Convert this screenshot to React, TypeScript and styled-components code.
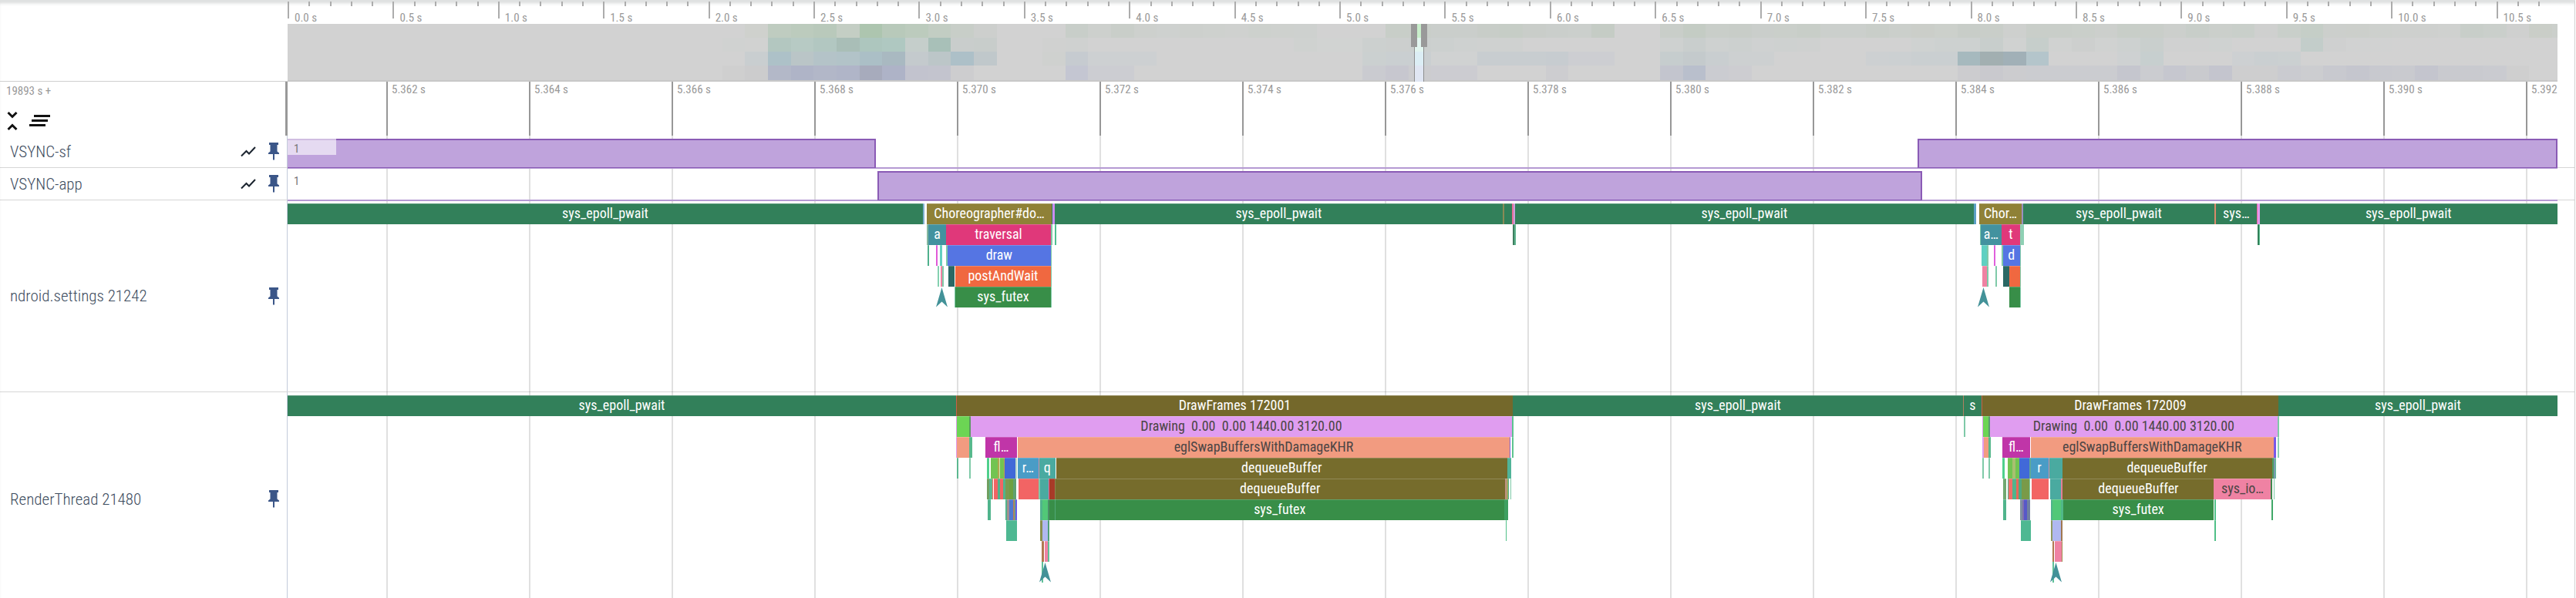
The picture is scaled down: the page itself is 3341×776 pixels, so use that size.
import React from "react";
import styled, { createGlobalStyle } from "styled-components";

const GlobalStyle = createGlobalStyle`
  * { box-sizing: border-box; }
  body {
    margin: 0;
    background: #fff;
    font-family: "Roboto Condensed", Roboto, sans-serif;
  }
`;

/* Length of the visible window, in timeline units. */
const SPAN = 2944;
const pct = (units: number) => `${(units / SPAN) * 100}%`;

type SliceData = [start: number, end: number, color: string, label?: string];

const GREEN = "#32805a";
const CHOREO = "#8f8137";
const FRAME = "#74682b";
const DEQUEUE = "#766c2c";
const DRAWING = "#e09df0";
const SALMON = "#f29b80";
const FUTEX = "#388e48";
const TEAL = "#43929f";
const QUEUE = "#4aaaa0";
const MINT = "#50b48c";
const PALE = "#7fcaa8";
const RED = "#f26464";
const LIME = "#72c452";
const SPRING = "#52c878";
const PERI = "#b0b8f0";
const PINK = "#ef82a3";
const MARK = "arrow";
const STEM = "stem";
const DARK_TEXT = [DRAWING, SALMON, PINK];

const settingsLanes: SliceData[][] = [
  [
    [0, 824, GREEN, "sys_epoll_pwait"],
    [824, 826, "#7fb0cf"],
    [829, 991, CHOREO, "Choreographer#do…"],
    [991, 992, GREEN],
    [992, 995, "#cc8cf0"],
    [995, 1576, GREEN, "sys_epoll_pwait"],
    [1576, 1578, "#8a8a55"],
    [1578, 1588, GREEN],
    [1588, 1590, "#e8709a"],
    [1590, 1592, "#c9a0dc"],
    [1592, 2187, GREEN, "sys_epoll_pwait"],
    [2187, 2190, "#5b9fc4"],
    [2194, 2249, CHOREO, "Chor…"],
    [2249, 2251, "#9c90c0"],
    [2251, 2499, GREEN, "sys_epoll_pwait"],
    [2499, 2501, "#d98a6a"],
    [2501, 2554, GREEN, "sys…"],
    [2554, 2555, "#f06aa0"],
    [2555, 2558, "#e39af0"],
    [2558, 2944, GREEN, "sys_epoll_pwait"],
  ],
  [
    [829, 831, "#85b8a0"],
    [831, 854, TEAL, "a"],
    [854, 990, "#e0387a", "traversal"],
    [990, 992, PALE],
    [995, 997, "#4fbf90"],
    [1589, 1591, "#3f7f60"],
    [1591, 1593, "#5cb28c"],
    [2195, 2196, PALE],
    [2196, 2223, TEAL, "a…"],
    [2223, 2247, "#e0387a", "t"],
    [2247, 2252, "#8fd0b4"],
    [2555, 2557, GREEN],
    [2557, 2558, "#5cc090"],
  ],
  [
    [830, 832, "#4fb08c"],
    [841, 843, "#e05ad8"],
    [846, 849, "#62d0c0"],
    [854, 856, PALE],
    [856, 990, "#5575e3", "draw"],
    [990, 991, PALE],
    [2197, 2204, "#5fd0c2"],
    [2204, 2206, PALE],
    [2213, 2215, "#e060dc"],
    [2223, 2225, PALE],
    [2225, 2247, "#5575e3", "d"],
    [2247, 2248, PALE],
  ],
  [
    [843, 845, "#85d0b0"],
    [847, 849, PINK],
    [849, 851, PALE],
    [857, 865, "#2a6864"],
    [866, 990, "#f06840", "postAndWait"],
    [990, 991, PALE],
    [2198, 2204, PINK],
    [2204, 2206, PALE],
    [2215, 2217, PALE],
    [2225, 2233, "#2a6864"],
    [2233, 2247, "#f06840"],
    [2247, 2248, PALE],
  ],
  [
    [841, 856, MARK],
    [865, 866, PALE],
    [866, 990, FUTEX, "sys_futex"],
    [990, 991, PALE],
    [2192, 2207, MARK],
    [2233, 2247, FUTEX],
    [2247, 2248, PALE],
  ],
];

const renderLanes: SliceData[][] = [
  [
    [0, 867, GREEN, "sys_epoll_pwait"],
    [867, 868, "#c8604a"],
    [868, 1589, FRAME, "DrawFrames 172001"],
    [1589, 2173, GREEN, "sys_epoll_pwait"],
    [2173, 2174, "#b08060"],
    [2174, 2197, GREEN, "s"],
    [2197, 2198, "#c8604a"],
    [2198, 2582, FRAME, "DrawFrames 172009"],
    [2582, 2944, GREEN, "sys_epoll_pwait"],
  ],
  [
    [867, 868, DRAWING],
    [868, 884, "#6cd554"],
    [884, 886, "#5a9a60"],
    [886, 1588, DRAWING, "Drawing  0.00  0.00 1440.00 3120.00"],
    [1588, 1590, "#5cc490"],
    [2174, 2176, PALE],
    [2198, 2199, DRAWING],
    [2199, 2206, "#6cd554"],
    [2206, 2208, "#5a9a70"],
    [2208, 2581, DRAWING, "Drawing  0.00  0.00 1440.00 3120.00"],
    [2581, 2583, PALE],
  ],
  [
    [867, 868, DRAWING],
    [868, 884, SALMON],
    [884, 888, "#57b88c"],
    [905, 946, "#c035a8", "fl…"],
    [947, 1585, SALMON, "eglSwapBuffersWithDamageKHR"],
    [1585, 1586, "#7a68e0"],
    [1588, 1590, "#5cc490"],
    [2198, 2200, DRAWING],
    [2200, 2206, SALMON],
    [2206, 2209, "#57b88c"],
    [2224, 2260, "#c035a8", "fl…"],
    [2261, 2576, SALMON, "eglSwapBuffersWithDamageKHR"],
    [2576, 2579, "#7858e8"],
    [2581, 2583, "#8fd0b4"],
  ],
  [
    [868, 870, "#5cb890"],
    [884, 886, PALE],
    [907, 910, "#4fd08c"],
    [912, 921, LIME],
    [921, 923, "#b0a850"],
    [923, 924, "#d0e8b0"],
    [924, 929, LIME],
    [929, 930, "#c0a050"],
    [930, 944, "#4169d8"],
    [944, 946, "#b8d8c8"],
    [947, 974, "#4a9cc6", "r…"],
    [974, 975, "#d090a8"],
    [975, 996, QUEUE, "q"],
    [997, 1582, DEQUEUE, "dequeueBuffer"],
    [1582, 1587, "#50b498"],
    [2198, 2200, PALE],
    [2206, 2208, PALE],
    [2224, 2227, "#4fd08c"],
    [2231, 2237, LIME],
    [2237, 2241, "#a8c070"],
    [2241, 2246, LIME],
    [2246, 2259, "#4169d8"],
    [2259, 2261, "#60a898"],
    [2261, 2284, "#4a9cc6", "r"],
    [2284, 2285, "#d090a8"],
    [2285, 2302, QUEUE],
    [2302, 2574, DEQUEUE, "dequeueBuffer"],
    [2574, 2576, "#4f9a60"],
    [2576, 2579, "#7898b0"],
    [2579, 2580, "#60c098"],
  ],
  [
    [907, 910, "#70a060"],
    [910, 914, "#5cb890"],
    [914, 915, "#f07868"],
    [916, 921, RED],
    [921, 924, MINT],
    [924, 928, RED],
    [928, 931, MINT],
    [931, 936, "#7a9a50"],
    [936, 941, "#6fa040"],
    [941, 945, "#60a070"],
    [948, 974, RED],
    [974, 976, "#80c8a8"],
    [976, 987, QUEUE],
    [987, 988, "#f060a0"],
    [988, 995, "#a83a28"],
    [995, 996, "#8c8450"],
    [996, 1579, DEQUEUE, "dequeueBuffer"],
    [1579, 1581, "#c09080"],
    [1581, 1583, "#a0a860"],
    [1583, 1584, MINT],
    [1586, 1587, PALE],
    [2225, 2229, "#70a870"],
    [2231, 2232, MINT],
    [2232, 2237, "#f07068"],
    [2237, 2242, MINT],
    [2242, 2245, "#e86858"],
    [2245, 2249, "#50a880"],
    [2249, 2259, "#7a9a48"],
    [2259, 2260, PALE],
    [2262, 2284, RED],
    [2286, 2301, QUEUE],
    [2301, 2303, "#e08098"],
    [2303, 2499, DEQUEUE, "dequeueBuffer"],
    [2499, 2573, PINK, "sys_io…"],
    [2573, 2575, "#408850"],
    [2577, 2578, PALE],
  ],
  [
    [908, 912, MINT],
    [931, 933, MINT],
    [933, 936, "#a09090"],
    [936, 941, "#5078d0"],
    [941, 943, "#b08060"],
    [943, 944, MINT],
    [944, 946, "#6858e8"],
    [976, 979, MINT],
    [979, 986, SPRING],
    [986, 988, "#4a9068"],
    [988, 995, FUTEX],
    [995, 996, "#50a878"],
    [996, 1578, FUTEX, "sys_futex"],
    [1578, 1583, "#3f9f60"],
    [2225, 2229, MINT],
    [2247, 2250, "#8090a0"],
    [2250, 2252, "#8070b0"],
    [2252, 2256, "#5858c8"],
    [2256, 2260, "#7080a0"],
    [2287, 2289, MINT],
    [2289, 2300, SPRING],
    [2300, 2303, "#50b888"],
    [2303, 2498, FUTEX, "sys_futex"],
    [2499, 2501, "#50c088"],
    [2573, 2575, "#40a868"],
  ],
  [
    [932, 946, "#4eb892"],
    [976, 979, "#8a9050"],
    [979, 986, PERI],
    [986, 988, "#50a078"],
    [1580, 1581, "#50c088"],
    [2248, 2261, "#4eb892"],
    [2287, 2289, "#8f9a60"],
    [2289, 2300, PERI],
    [2300, 2302, "#a07850"],
    [2499, 2501, "#50c088"],
  ],
  [
    [978, 981, "#b07850"],
    [982, 986, PINK],
    [986, 988, "#60c098"],
    [2289, 2291, "#b07850"],
    [2292, 2301, PINK],
    [2301, 2302, "#a09050"],
  ],
  [
    [975, 990, STEM],
    [2286, 2301, STEM],
  ],
];

/* Load per CPU group: one row each, [first column, colours...] runs. */
const heat: [number, string[]][][] = [
  [
    [20, ["#cfd1cd", "#bfccc0", "#bccbbd", "#b9c9bb", "#c4cec4", "#adc5af", "#b8c9ba", "#bccbbd", "#c2cdc3", "#c8cec8", "#cdcfcd"]],
    [34, ["#c8cec9", "#cdd0cd", "#c9cec9", "#cdd0cd", "#ced1cf", "#cdd0cd", "#ced1ce", "#cfd1cf", "#cdd1cd", "#ced1ce", "#ced1cf"]],
    [48, ["#c8cec8", "#c9cec9", "#cacecb", "#cacecb", "#c8cdc8", "#c6cdc6", "#c9cdc9", "#cacecb", "#cbcfcc", "#c5ccc5"]],
    [60, ["#c9cec9", "#c4ccc4", "#c9cec9", "#c8cdc8", "#cacecb", "#cacfca", "#c8cec8", "#cbcfcc", "#cbcfcc", "#c9cec9", "#cbcfcb", "#cbcec9", "#ccd0cb"]],
    [73, ["#c8cdc8", "#c9cec9", "#ced0ce", "#c9cec9", "#c9cec9", "#cacfca", "#cccfcc", "#c8cec8", "#c9cec9", "#cccfcc", "#c8cec9", "#cbcfcb", "#c9cfca"]],
    [86, ["#cfd0cf", "#c9cfca", "#c5cec7", "#cccfcc", "#cccfcb", "#cdd0cd", "#ced0ce", "#ced0ce", "#cfd1cf", "#c8cec9", "#cacfcb", "#cfd0cf", "#cacec8", "#cbcfcb"]],
  ],
  [
    [19, ["#d0d2d1", "#d1d2d1", "#b3c7c0", "#b7cac4", "#b2c7c1", "#a9beb7", "#adc6be", "#afc8c1", "#c5cecb", "#a8c0b8", "#c9cdcc", "#c8cdcb"]],
    [33, ["#d0d1d0", "#cfd1d0"]],
    [44, ["#cfd2d0", "#d1d3d2", "#d1d3d2", "#ccd0cf", "#cccfce", "#cbcfce", "#ccd0cf", "#ced1d0", "#cfd1d0", "#cfd1d0"]],
    [60, ["#ced1d0", "#c9cecd", "#ced1d0", "#ccd0cf", "#cfd1d1", "#ced1d0", "#cfd1d0"]],
    [71, ["#cfd2d1", "#cdd1d0", "#cdd1d0", "#c8cecc", "#d0d2d1", "#c6cecb", "#d0d2d1", "#cdcfce", "#d0d2d1", "#cdd1d0", "#c9cfcd", "#d0d1d1", "#d0d1d1", "#cfd2d1"]],
    [88, ["#c3cdca", "#cfd0d0", "#d1d2d2", "#d1d2d2"]],
  ],
  [
    [20, ["#c9ced0", "#adc1c8", "#bac5c7", "#b4c3c8", "#b2c3c8", "#abbfc6", "#a9b9c1", "#c4cacd", "#bcc6c8", "#adc0c8", "#c0c8cb"]],
    [33, ["#cfd1cf", "#c6cbd0", "#cdd0d2", "#cdd0d2", "#cdd0d2"]],
    [47, ["#cbd0d0", "#cacfd1", "#cacfd1", "#d0d2d2", "#d0d2d2", "#c8cdd0", "#c8cdd0", "#c8cdd0", "#c7ccd0", "#cdced2", "#cdced2"]],
    [60, ["#c6cdce", "#c4cacc", "#c9ced0", "#cdd0d1", "#cdd0d1"]],
    [69, ["#cdd0d2", "#ccd0d2", "#cacfd1", "#cacfd1", "#a6b9be", "#a2afb1", "#a1b0b7", "#b4c5cb"]],
    [80, ["#ced1d2", "#c7cfcf"]],
    [85, ["#cdd0d2", "#cacfd1", "#cbd0d1"]],
  ],
  [
    [19, ["#cfcfcf", "#cccccd", "#b3b8c8", "#afb4c7", "#b2b7c8", "#b0b5c8", "#a7abbc", "#aeb3c7", "#c2c3ce", "#c3c4ce", "#cdcdcf"]],
    [34, ["#c4c6d2", "#cccdd2", "#cccdd2"]],
    [47, ["#cacbd0", "#c7c7cf", "#cccccf", "#ccccd1", "#ccccd1"]],
    [55, ["#cdcdd0"]],
    [60, ["#c3c5ce", "#b9bfcc", "#cbccd1", "#cdcdd1"]],
    [73, ["#cccccf", "#c9c9ce", "#cccccf", "#cbccd0", "#cbccd0", "#cbccd0", "#cbccd0", "#c5c6ce", "#cbccd0", "#c6c7cf", "#c9cace", "#c4c5ce", "#cececf", "#cececf", "#cacbd0", "#cccdd0", "#c8c9cf", "#c5c6ce", "#c8c9cf", "#c9cacf", "#c4c5ce", "#c9cacf", "#c9cacf", "#cacbd0", "#cfcfcf"]],
  ],
];

const heatRow = (runs: [number, string[]][]) => {
  const cells: string[] = Array(100).fill("#d2d2d2");
  runs.forEach(([first, colors]) => colors.forEach((c, i) => (cells[first + i] = c)));
  return cells;
};

const Viewer = styled.main`
  height: 100vh;
  overflow: hidden;
  position: relative;
  border-top: 2px solid #dfe1e1;
  margin-right: 1px;
  border-right: 1px solid #d4d4d4;
  box-shadow: inset 0 4px 4px -2px #d8dada;
`;

const Columns = styled.div`
  display: grid;
  grid-template-columns: 373px minmax(0, 1fr) 22px;
`;

const Overview = styled(Columns)`
  height: 104px;
`;

const OverviewSide = styled.div`
  border-bottom: 1px solid #cfcfcf;
`;

const OverviewMain = styled.div`
  display: flex;
  flex-direction: column;
`;

const TopAxis = styled.div`
  display: flex;
  height: 29px;
  overflow: hidden;
`;

const TopTick = styled.div<{ $major: boolean }>`
  flex: none;
  height: ${(p) => (p.$major ? 22 : 6)}px;
  border-left: 2px solid #acacac;
  white-space: nowrap;
`;

const AxisText = styled.span`
  display: block;
  font-size: 15px;
  line-height: 16px;
  color: #999;
`;

const TopText = styled(AxisText)`
  padding: 13px 0 0 7px;
`;

const MiniMap = styled.div`
  position: relative;
  flex: 1;
  display: grid;
  grid-template-columns: repeat(99, minmax(0, 30fr)) minmax(0, 7fr);
  grid-template-rows: 18px 18px 18px 1fr;
  border-bottom: 2px solid #c8c8c8;
`;

const Cell = styled.i<{ $c: string }>`
  background: ${(p) => p.$c};
`;

const Brush = styled.div`
  position: absolute;
  top: 0;
  bottom: -2px;
  width: 13px;
  display: grid;
  grid-template-rows: 18px 18px 18px 1fr;
  border: solid #8f8f8f;
  border-width: 0 1px;
`;

const Handle = styled.button<{ $side: "left" | "right" }>`
  position: absolute;
  top: 0;
  ${(p) => p.$side}: -5px;
  width: 8px;
  height: 30px;
  padding: 0;
  border: 0;
  background: #999;
`;

const Body = styled.div`
  position: relative;
`;

const GridLayer = styled(Columns)`
  position: absolute;
  inset: 0;
  pointer-events: none;
`;

const GridLines = styled.div`
  grid-column: 2;
  display: flex;
  overflow: hidden;
`;

const GridLine = styled.div`
  flex: none;
  border-left: 2px solid rgba(0, 0, 0, 0.12);
`;

const AxisRow = styled(Columns)`
  height: 70px;
`;

const AxisSide = styled.div`
  display: flex;
  flex-direction: column;
  padding: 4px 8px 0;
  border-right: 3px solid #999;
`;

const Tools = styled.div`
  display: flex;
  gap: 8px;
  padding-top: 15px;
`;

const IconButton = styled.button`
  display: flex;
  padding: 0;
  border: 0;
  background: none;
  cursor: pointer;
`;

const TimeAxis = styled.div`
  display: flex;
  overflow: hidden;
`;

const TimeTick = styled.div`
  flex: none;
  border-left: 2px solid #acacac;
  padding: 2px 0 0 5px;
  white-space: nowrap;
`;

const Track = styled(Columns)<{ $h: number }>`
  min-height: ${(p) => p.$h}px;
  border-bottom: 1px solid rgba(0, 0, 0, 0.16);
`;

const TrackHead = styled.header`
  display: flex;
  align-items: center;
  gap: 16px;
  padding: 0 10px 0 13px;
  border-right: 1px solid #c3cbda;
`;

const TrackTitle = styled.h2`
  flex: 1;
  margin: 0;
  font-size: 21px;
  line-height: 24px;
  font-weight: 300;
  color: #3c4b5d;
`;

/* The baseline is drawn over the border of the row. */
const Counter = styled.div`
  position: relative;
  display: flex;
  height: 39px;
  margin: 4px 0 -2px;
  border-bottom: 2px solid #b59ad3;
  z-index: 1;
`;

const CounterBar = styled.div<{ $open?: boolean }>`
  flex: none;
  margin-bottom: -1px;
  background: #bfa3dc;
  border: 2px solid #8a5bb5;
  border-bottom-width: 1px;
  ${(p) => p.$open && "border-left: 0;"}
`;

const CounterValue = styled.span`
  position: absolute;
  left: 0;
  top: 0;
  width: 63px;
  height: 21px;
  padding: 4px 8px 0;
  font-size: 15px;
  line-height: 18px;
  color: #777;
  background: rgba(255, 255, 255, 0.6);
`;

const Lanes = styled.div`
  position: relative;
  padding-top: 4px;
`;

const Lane = styled.div`
  display: flex;
  height: 27px;
`;

const SliceBox = styled.div<{ $c: string }>`
  flex: none;
  overflow: hidden;
  background: ${(p) => p.$c};
  box-shadow: inset 0 1px rgba(255, 255, 255, 0.2);
  color: ${(p) => (DARK_TEXT.includes(p.$c) ? "#4b4545" : "#fff")};
  font-size: 18px;
  line-height: 26px;
  text-align: center;
  white-space: pre;
`;

const Marker = styled.svg`
  flex: none;
  height: 27px;
`;

const place = (prevEnd: number, start: number, end: number) => ({
  marginLeft: pct(start - prevEnd),
  width: pct(end - start),
});

const FlameChart = ({ lanes }: { lanes: SliceData[][] }) => (
  <Lanes>
    {lanes.map((lane, depth) => (
      <Lane key={depth}>
        {lane.map(([start, end, color, label], i) => {
          const style = place(i ? lane[i - 1][1] : 0, start, end);
          return color === MARK || color === STEM ? (
            <Marker key={i} style={style} viewBox="0 0 15 27">
              {color === STEM && <path d="M3 0h2v27H3z" fill="#60c098" />}
              <path d="M7.500 1L15 26.500L7.500 19.500L0 26.500z" fill="#439298" />
            </Marker>
          ) : (
            <SliceBox key={i} $c={color} style={style}>
              {label}
            </SliceBox>
          );
        })}
      </Lane>
    ))}
  </Lanes>
);

const PinIcon = () => (
  <svg width="14" height="23" viewBox="0 0 14 23" fill="#3b5688">
    <path d="M1 0h12v3h-1.500v8.500L14 13.500V15H8v7.500H6V15H0v-1.500L2.500 11.500V3H1z" />
  </svg>
);

const ChartIcon = () => (
  <svg width="20" height="14" viewBox="0 0 20 14" fill="none" stroke="#1c2530" strokeWidth="2">
    <path d="M1 12.500L7.500 6L11 9.500L19 1" />
  </svg>
);

const Pin = () => (
  <IconButton aria-label="Unpin track">
    <PinIcon />
  </IconButton>
);

const CounterTrack = ({ name, bars }: { name: string; bars: [number, number][] }) => (
  <Track $h={42}>
    <TrackHead>
      <TrackTitle>{name}</TrackTitle>
      <IconButton aria-label="Chart options">
        <ChartIcon />
      </IconButton>
      <Pin />
    </TrackHead>
    <Counter>
      {bars.map(([start, end], i) => (
        <CounterBar key={start} $open={start === 0} style={place(i ? bars[i - 1][1] : 0, start, end)} />
      ))}
      <CounterValue>1</CounterValue>
    </Counter>
  </Track>
);

const ThreadTrack = ({ name, height, lanes }: { name: string; height: number; lanes: SliceData[][] }) => (
  <Track $h={height}>
    <TrackHead>
      <TrackTitle>{name}</TrackTitle>
      <Pin />
    </TrackHead>
    <FlameChart lanes={lanes} />
  </Track>
);

const TICKS = Array.from({ length: 108 }, (_, i) => i);
const TIMES = Array.from({ length: 16 }, (_, i) => (5.362 + i * 0.002).toFixed(3));
const STEP = 185;
const FIRST = 128;
const stepStyle = (i: number) => ({ marginLeft: i ? 0 : pct(FIRST), width: pct(STEP) });

export default function App() {
  return (
    <>
      <GlobalStyle />
      <Viewer>
        <Overview>
          <OverviewSide />
          <OverviewMain>
            <TopAxis>
              {TICKS.map((i) => (
                <TopTick key={i} $major={i % 5 === 0} style={{ width: pct(27.29) }}>
                  {i % 5 === 0 && <TopText>{(i / 10).toFixed(1)} s</TopText>}
                </TopTick>
              ))}
            </TopAxis>
            <MiniMap>
              {heat.flatMap((runs, r) => heatRow(runs).map((c, i) => <Cell key={`${r}-${i}`} $c={c} />))}
              <Brush style={{ left: pct(1461) }}>
                <Cell $c="#c9eecb" />
                <Cell $c="#e2f5ef" />
                <Cell $c="#dceef5" />
                <Cell $c="#e0e6f3" />
                <Handle $side="left" aria-label="Window start" />
                <Handle $side="right" aria-label="Window end" />
              </Brush>
            </MiniMap>
          </OverviewMain>
        </Overview>
        <Body>
          <GridLayer>
            <GridLines>
              {TIMES.map((t, i) => (
                <GridLine key={t} style={stepStyle(i)} />
              ))}
            </GridLines>
          </GridLayer>
          <AxisRow>
            <AxisSide>
              <AxisText>19893 s +</AxisText>
              <Tools>
                <IconButton aria-label="Collapse all">
                  <svg width="16" height="32" viewBox="0 0 16 32" fill="none" stroke="#111" strokeWidth="3">
                    <path d="M2.500 5L8 10.500L13.500 5M2.500 27L8 21.500L13.500 27" />
                  </svg>
                </IconButton>
                <IconButton aria-label="Clear all pinned tracks">
                  <svg width="36" height="32" viewBox="0 0 36 32" fill="#111">
                    <path d="M12 8h21v3H12zM9 14h21v3H9zM6 20h21v3H6z" />
                  </svg>
                </IconButton>
              </Tools>
            </AxisSide>
            <TimeAxis>
              {TIMES.map((t, i) => (
                <TimeTick key={t} style={stepStyle(i)}>
                  <AxisText>{i < TIMES.length - 1 ? `${t} s` : t}</AxisText>
                </TimeTick>
              ))}
            </TimeAxis>
          </AxisRow>
          <CounterTrack name="VSYNC-sf" bars={[[0, 763], [2114, 2944]]} />
          <CounterTrack name="VSYNC-app" bars={[[765, 2120]]} />
          <ThreadTrack name="ndroid.settings 21242" height={249} lanes={settingsLanes} />
          <ThreadTrack name="RenderThread 21480" height={278} lanes={renderLanes} />
        </Body>
      </Viewer>
    </>
  );
}
